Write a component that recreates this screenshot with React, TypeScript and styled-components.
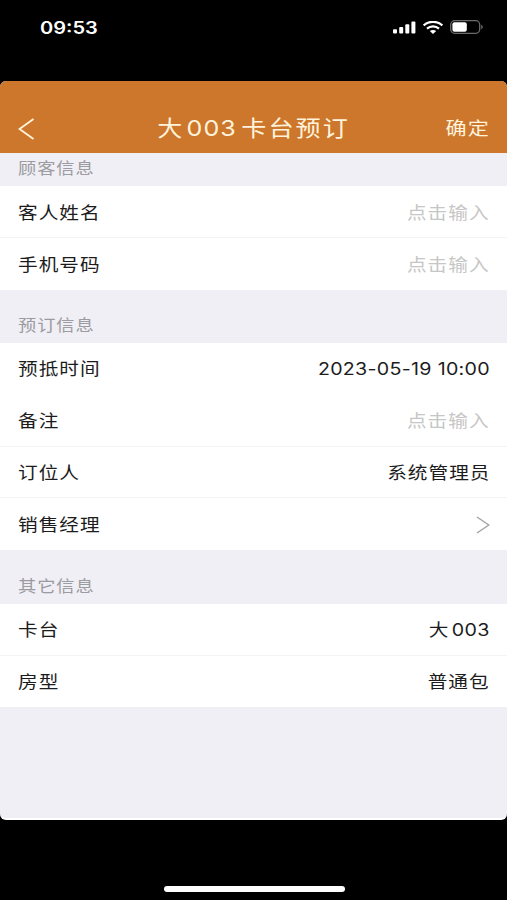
import styled, { createGlobalStyle } from "styled-components";

const colors = {
  accent: "#cd772d",
  cream: "#fff3dc",
  page: "#f0eff5",
  text: "#1c1c1c",
  hint: "#c6c6c6",
  caption: "#9c9ba0",
  line: "#f4f4f5",
};

type RowData = {
  label: string;
  value?: string;
  digits?: string;
  hint?: boolean;
  arrow?: boolean;
  noLine?: boolean;
};

const customer: RowData[] = [
  { label: "客人姓名", value: "点击输入", hint: true },
  { label: "手机号码", value: "点击输入", hint: true, noLine: true },
];

const booking: RowData[] = [
  { label: "预抵时间", digits: "2023-05-19 10:00", noLine: true },
  { label: "备注", value: "点击输入", hint: true },
  { label: "订位人", value: "系统管理员" },
  { label: "销售经理", arrow: true, noLine: true },
];

const other: RowData[] = [
  { label: "卡台", value: "大", digits: "003" },
  { label: "房型", value: "普通包", noLine: true },
];

const Rows = ({ items, height }: { items: RowData[]; height: number }) => (
  <Group $height={height}>
    {items.map((item) => (
      <Row key={item.label} $noLine={item.noLine}>
        <Label>{item.label}</Label>
        <Value $hint={item.hint}>
          {item.value && <span>{item.value}</span>}
          {item.digits && <Digits>{item.digits}</Digits>}
        </Value>
        {item.arrow && (
          <svg width="14" height="18" viewBox="0 0 14 18" fill="none">
            <path d="M1 1L12.8 9L1 17" stroke="#a3a3a3" strokeWidth="1.4" />
          </svg>
        )}
      </Row>
    ))}
  </Group>
);

const App = () => {
  return (
    <Phone>
      <GlobalStyle />
      <StatusBar>
        <Time>09:53</Time>
        <StatusIcons>
          <svg width="23" height="13" viewBox="0 0 23 13" fill="#fff">
            <rect x="0" y="8.2" width="4" height="4.3" rx="1" />
            <rect x="6.2" y="6" width="4" height="6.5" rx="1" />
            <rect x="12.3" y="3.3" width="4" height="9.2" rx="1" />
            <rect x="18.4" y="0.4" width="4" height="12.1" rx="1" />
          </svg>
          <svg width="20" height="13" viewBox="0 0 20 13" fill="none" stroke="#fff">
            <path d="M0.7 4.4C5.8 -0.4 14.2 -0.4 19.3 4.4" strokeWidth="2.2" />
            <path d="M4 7.6C7.3 4.6 12.7 4.6 16 7.6" strokeWidth="2.1" />
            <path d="M6.8 10.1C8.6 8.5 11.4 8.5 13.2 10.1L10 12.9Z" fill="#fff" stroke="none" />
          </svg>
          <svg width="34" height="14" viewBox="0 0 34 14" fill="none">
            <rect x="0.7" y="0.7" width="29" height="12.6" rx="4" stroke="#6b6b6b" strokeWidth="1.3" />
            <rect x="2.4" y="2.3" width="14.4" height="9.4" rx="2" fill="#fff" />
            <path d="M31.2 4.8C33.3 5.6 33.3 8.4 31.2 9.2Z" fill="#6b6b6b" />
          </svg>
        </StatusIcons>
      </StatusBar>
      <Screen>
        <Header>
          <Back>
            <svg width="17" height="22" viewBox="0 0 17 22" fill="none">
              <path d="M15.5 1L1.5 11L15.5 21" stroke={colors.cream} strokeWidth="1.9" />
            </svg>
          </Back>
          <Title>
            <span>大</span>
            <TitleDigits>003</TitleDigits>
            <span>卡台预订</span>
          </Title>
          <Confirm>确定</Confirm>
        </Header>
        <Caption $height={33}>顾客信息</Caption>
        <Rows items={customer} height={104} />
        <Caption $height={53}>预订信息</Caption>
        <Rows items={booking} height={207} />
        <Caption $height={54}>其它信息</Caption>
        <Rows items={other} height={103} />
      </Screen>
      <HomeArea>
        <HomeIndicator />
      </HomeArea>
    </Phone>
  );
};

export default App;

const GlobalStyle = createGlobalStyle`
  * {
    box-sizing: border-box;
  }

  body {
    margin: 0;
    background-color: #000;
    font-family: Inter, "Noto Sans CJK SC", sans-serif;
  }

  svg {
    display: block;
    flex-shrink: 0;
  }
`;

const Phone = styled.div`
  display: flex;
  flex-direction: column;
  width: 507px;
  height: 900px;
  overflow: hidden;
  background-color: #000;
`;

const StatusBar = styled.div`
  display: flex;
  justify-content: space-between;
  height: 81px;
  padding: 20px 23px 0 40px;
`;

const Time = styled.span`
  height: 15px;
  line-height: 17px;
  font-size: 17px;
  font-weight: 600;
  color: #fff;
  transform: scaleX(1.18);
  transform-origin: left;
`;

const StatusIcons = styled.div`
  display: flex;
  gap: 7px;
  height: 14px;
  align-items: center;
`;

const Screen = styled.main`
  height: 739px;
  border-radius: 6px;
  overflow: hidden;
  background-color: ${colors.page};
  border-bottom: 2px solid #fff;
`;

const Header = styled.header`
  display: grid;
  grid-template-columns: 80px 1fr 80px;
  align-items: center;
  height: 72px;
  padding: 22px 18px 0;
  background-color: ${colors.accent};
  color: ${colors.cream};
`;

const Back = styled.div`
  padding-top: 2px;
`;

const Title = styled.div`
  display: flex;
  justify-content: center;
  align-items: center;
  line-height: 30px;
  font-size: 22px;
  letter-spacing: 1.8px;
  white-space: nowrap;
  transform: scaleX(1.14);
`;

const TitleDigits = styled.span`
  margin: 0 4px 0 2px;
  letter-spacing: 0.9px;
`;

const Confirm = styled.div`
  justify-self: end;
  margin-right: -1px;
  padding-top: 1px;
  font-size: 18px;
  line-height: 26px;
  letter-spacing: 1px;
  transform: scaleX(1.17);
  transform-origin: right;
`;

const Caption = styled.div<{ $height: number }>`
  display: flex;
  align-items: flex-end;
  height: ${({ $height }) => $height}px;
  padding: 0 18px 6px;
  font-size: 16px;
  line-height: 24px;
  letter-spacing: 0.8px;
  color: ${colors.caption};
  transform: scaleX(1.14);
  transform-origin: 18px center;
`;

const Group = styled.div<{ $height: number }>`
  display: flex;
  flex-direction: column;
  height: ${({ $height }) => $height}px;
  background-color: #fff;
`;

const Row = styled.div<{ $noLine?: boolean }>`
  display: flex;
  flex: 1;
  justify-content: space-between;
  align-items: center;
  padding: 2px 17px 0 18px;
  font-size: 17px;
  line-height: 26px;
  color: ${colors.text};
  border-bottom: 1px solid ${({ $noLine }) => ($noLine ? "transparent" : colors.line)};
`;

const Label = styled.span`
  letter-spacing: 0.9px;
  transform: scaleX(1.155);
  transform-origin: left;
`;

const Value = styled.span<{ $hint?: boolean }>`
  display: flex;
  margin-left: auto;
  letter-spacing: 0.9px;
  color: ${({ $hint }) => ($hint ? colors.hint : colors.text)};
  transform: scaleX(1.155);
  transform-origin: right;
`;

const Digits = styled.span`
  margin-left: 2px;
  letter-spacing: 0.25px;
`;

const HomeArea = styled.div`
  display: flex;
  flex: 1;
  justify-content: center;
  align-items: flex-end;
  padding: 0 0 8px 1px;
`;

const HomeIndicator = styled.div`
  width: 181px;
  height: 6px;
  border-radius: 3px;
  background-color: #fff;
`;
